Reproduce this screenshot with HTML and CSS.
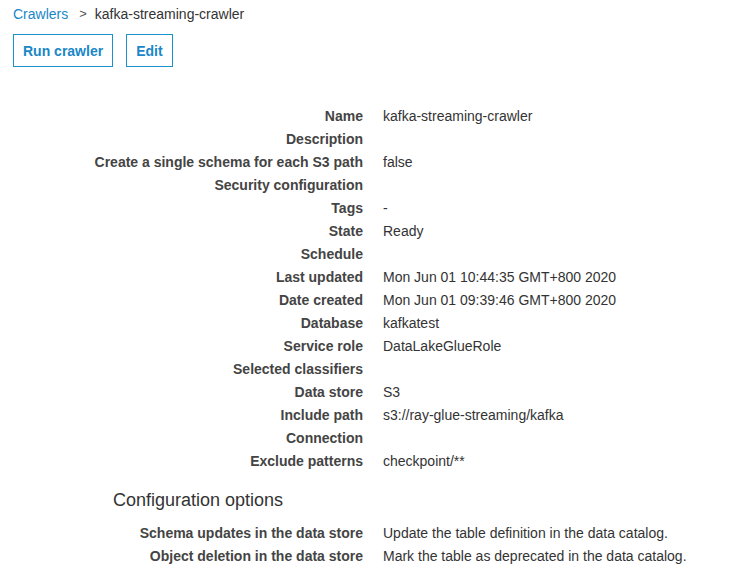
FILE: index.html
```html
<!DOCTYPE html>
<html>
<head>
<meta charset="utf-8">
<link rel="stylesheet" href="styles.css">
</head>
<body>
<nav class="crumbs">
  <a class="crumb-link" href="#">Crawlers</a>
  <span class="crumb-sep">&gt;</span>
  <span class="crumb-current">kafka-streaming-crawler</span>
</nav>
<div class="actions">
  <button class="btn">Run crawler</button>
  <button class="btn">Edit</button>
</div>
<dl class="details">
  <dt>Name</dt><dd>kafka-streaming-crawler</dd>
  <dt>Description</dt><dd></dd>
  <dt>Create a single schema for each S3 path</dt><dd>false</dd>
  <dt>Security configuration</dt><dd></dd>
  <dt>Tags</dt><dd>-</dd>
  <dt>State</dt><dd>Ready</dd>
  <dt>Schedule</dt><dd></dd>
  <dt>Last updated</dt><dd>Mon Jun 01 10:44:35 GMT+800 2020</dd>
  <dt>Date created</dt><dd>Mon Jun 01 09:39:46 GMT+800 2020</dd>
  <dt>Database</dt><dd>kafkatest</dd>
  <dt>Service role</dt><dd>DataLakeGlueRole</dd>
  <dt>Selected classifiers</dt><dd></dd>
  <dt>Data store</dt><dd>S3</dd>
  <dt>Include path</dt><dd>s3://ray-glue-streaming/kafka</dd>
  <dt>Connection</dt><dd></dd>
  <dt>Exclude patterns</dt><dd>checkpoint/**</dd>
</dl>
<h2 class="section-title">Configuration options</h2>
<dl class="details config">
  <dt>Schema updates in the data store</dt><dd>Update the table definition in the data catalog.</dd>
  <dt>Object deletion in the data store</dt><dd>Mark the table as deprecated in the data catalog.</dd>
</dl>
</body>
</html>
```
FILE: styles.css
```css
html, body {
  margin: 0;
  padding: 0;
  background: #ffffff;
}
body {
  font-family: "Liberation Sans", Arial, sans-serif;
  font-size: 14px;
  color: #333333;
  width: 735px;
  height: 582px;
  overflow: hidden;
}
.crumbs {
  display: flex;
  align-items: center;
  padding: 4px 13px 0;
  height: 20px;
  line-height: 20px;
}
.crumb-link {
  color: #1a87c8;
  text-decoration: none;
}
.crumb-sep {
  color: #555;
  margin: 0 8px 0 11px;
  font-size: 13px;
}
.crumb-current {
  color: #333;
}
.actions {
  display: flex;
  gap: 13px;
  padding: 0 13px;
  margin-top: 10px;
}
.btn {
  font-family: inherit;
  font-size: 14px;
  font-weight: bold;
  color: #1a87c8;
  background: #fff;
  border: 1px solid #1a92cc;
  border-radius: 0;
  height: 33px;
  padding: 0 9px;
  margin: 0;
  cursor: pointer;
}
.details {
  display: grid;
  grid-template-columns: 363px 1fr;
  column-gap: 20px;
  margin: 38px 0 0;
  line-height: 23px;
}
.details dt {
  text-align: right;
  font-weight: bold;
  color: #444;
  height: 23px;
  white-space: nowrap;
}
.details dd {
  margin: 0;
  height: 23px;
  white-space: nowrap;
  color: #333;
}
.section-title {
  font-size: 18px;
  font-weight: normal;
  color: #333;
  line-height: 24px;
  margin: 15px 0 0 113px;
}
.details.config {
  margin-top: 10px;
}
```
